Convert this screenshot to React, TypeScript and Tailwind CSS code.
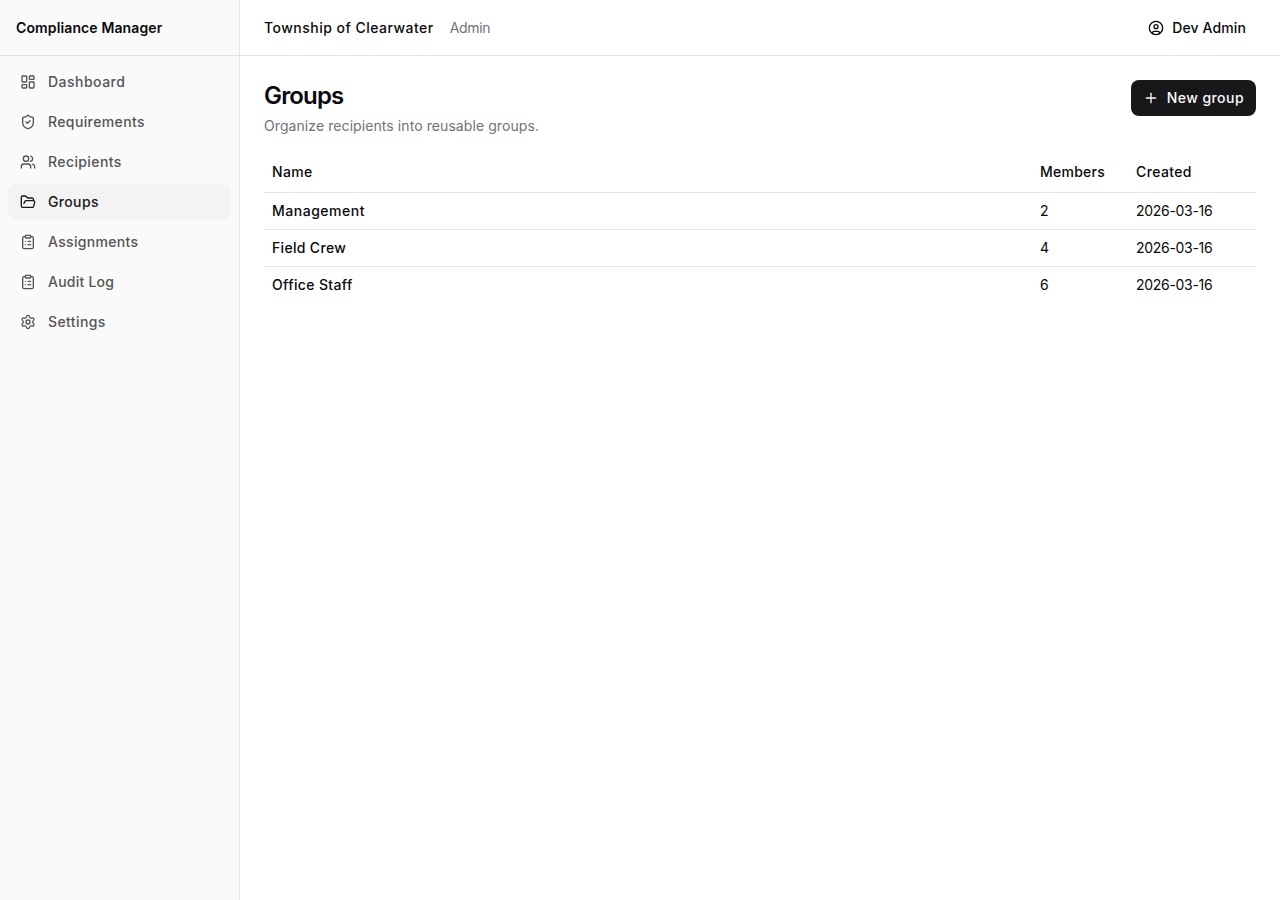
import React from 'react';
import {
  CircleUser,
  ClipboardList,
  FolderOpen,
  LayoutDashboard,
  Plus,
  Settings,
  ShieldCheck,
  Users,
  type LucideIcon,
} from 'lucide-react';

interface NavItem {
  label: string;
  icon: LucideIcon;
  tracking: string;
  active?: boolean;
}

interface Group {
  name: string;
  tracking: string;
  members: number;
  created: string;
}

const navItems: NavItem[] = [
  { label: 'Dashboard', icon: LayoutDashboard, tracking: 'tracking-[0.48px]' },
  { label: 'Requirements', icon: ShieldCheck, tracking: 'tracking-[0.38px]' },
  { label: 'Recipients', icon: Users, tracking: 'tracking-[0.4px]' },
  { label: 'Groups', icon: FolderOpen, tracking: 'tracking-[0.35px]', active: true },
  { label: 'Assignments', icon: ClipboardList, tracking: 'tracking-[0.32px]' },
  { label: 'Audit Log', icon: ClipboardList, tracking: 'tracking-[0.24px]' },
  { label: 'Settings', icon: Settings, tracking: 'tracking-[0.4px]' },
];

const groups: Group[] = [
  { name: 'Management', tracking: 'tracking-[0.52px]', members: 2, created: '2026-03-16' },
  { name: 'Field Crew', tracking: 'tracking-[0.32px]', members: 4, created: '2026-03-16' },
  { name: 'Office Staff', tracking: 'tracking-[0.36px]', members: 6, created: '2026-03-16' },
];

const Sidebar: React.FC = () => (
  <aside className="flex w-60 shrink-0 flex-col border-r border-[#e4e4e4] bg-[#fafafa]">
    <div className="flex h-14 items-center border-b border-[#e4e4e4] px-4">
      <span className="text-sm font-semibold tracking-[0.12px]">Compliance Manager</span>
    </div>
    <nav className="flex flex-col gap-1 p-2">
      {navItems.map(({ label, icon: Icon, tracking, active }) => (
        <a
          key={label}
          href="#"
          className={`flex h-9 items-center gap-3 rounded-lg px-3 text-sm font-medium ${tracking} ${
            active ? 'bg-[#f3f3f3] text-[#18181b]' : 'text-[#545454]'
          }`}
        >
          <Icon className="size-4" />
          {label}
        </a>
      ))}
    </nav>
  </aside>
);

const Header: React.FC = () => (
  <header className="flex h-14 items-center justify-between border-b border-[#e4e4e4] px-6">
    <div className="flex items-center gap-4 text-sm">
      <span className="font-medium tracking-[0.48px]">Township of Clearwater</span>
      <span className="tracking-[-0.35px] text-[#71717a]">Admin</span>
    </div>
    <button className="flex h-8 items-center gap-2 rounded-lg px-2.5 text-sm font-medium tracking-[0.12px]">
      <CircleUser className="size-4" />
      Dev Admin
    </button>
  </header>
);

const GroupsTable: React.FC = () => (
  <table className="w-full table-fixed text-sm">
    <thead>
      <tr className="border-b border-[#e4e4e4]">
        <th className="h-10 px-2 text-left font-medium tracking-[0.35px]">Name</th>
        <th className="h-10 w-24 px-2 text-left font-medium tracking-[0.25px]">Members</th>
        <th className="h-10 w-32 px-2 text-left font-medium tracking-[0.38px]">Created</th>
      </tr>
    </thead>
    <tbody>
      {groups.map((group) => (
        <tr key={group.name} className="border-b border-[#e4e4e4] last:border-0">
          <td className={`p-2 font-medium ${group.tracking}`}>{group.name}</td>
          <td className="p-2">{group.members}</td>
          <td className="p-2 tracking-[-0.3px]">{group.created}</td>
        </tr>
      ))}
    </tbody>
  </table>
);

export default function App() {
  return (
    <div className="flex h-screen bg-white font-['Inter',sans-serif] text-[#09090b]">
      <Sidebar />
      <div className="flex min-w-0 flex-1 flex-col">
        <Header />
        <main className="flex flex-1 flex-col gap-4 p-6">
          <div className="flex items-start justify-between">
            <div>
              <h1 className="text-2xl font-semibold tracking-[-0.85px]">Groups</h1>
              <p className="mt-1 text-sm tracking-[0.08px] text-[#71717a]">Organize recipients into reusable groups.</p>
            </div>
            <button className="flex h-9 items-center gap-2 rounded-lg bg-[#18181b] px-3 text-sm font-medium tracking-[0.45px] text-[#fafafa]">
              <Plus className="size-4" />
              New group
            </button>
          </div>
          <GroupsTable />
        </main>
      </div>
    </div>
  );
}
